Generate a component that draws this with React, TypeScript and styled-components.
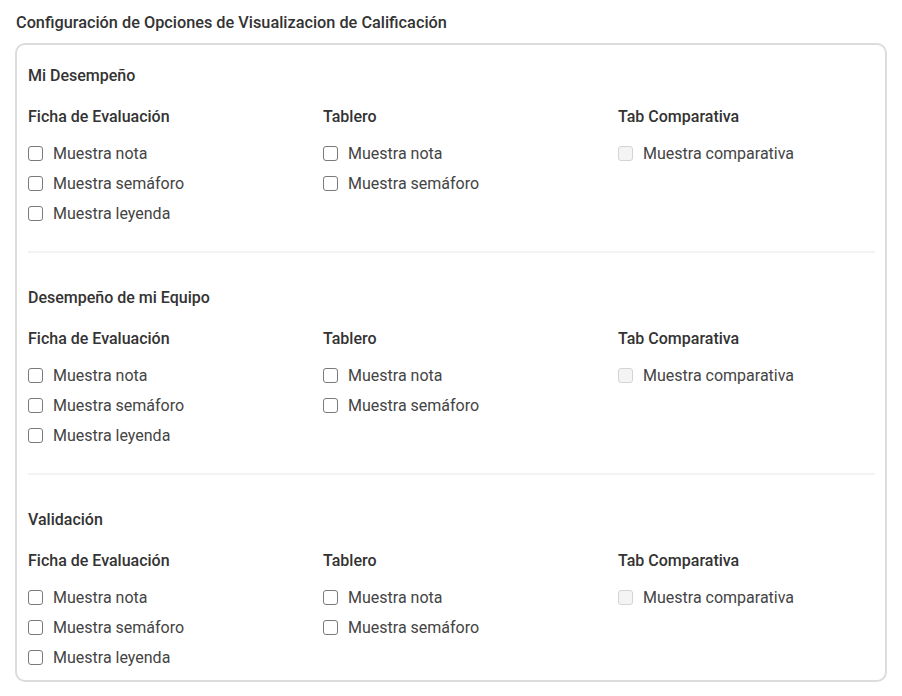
import styled, { createGlobalStyle } from "styled-components";

const GlobalStyle = createGlobalStyle`
  body {
    margin: 0;
    background: #ffffff;
    font-family: Roboto, "Liberation Sans", sans-serif;
    color: #333333;
  }
`;

const Page = styled.div`
  padding: 13px 15px 14px 15px;
`;

const PageTitle = styled.h2`
  margin: 0 0 10px 1px;
  font-size: 16.3px;
  line-height: 20px;
  font-weight: 500;
  color: #333333;
`;

const Card = styled.div`
  border: 2px solid #dcdcdc;
  border-radius: 10px;
  padding: 21px 10px 8px 11px;
`;

const Section = styled.section``;

const SectionTitle = styled.h3`
  margin: 0 0 21px;
  font-size: 16px;
  line-height: 20px;
  font-weight: 500;
  color: #333333;
`;

const Columns = styled.div`
  display: grid;
  grid-template-columns: 295px 295px 1fr;
`;

const Column = styled.div`
  display: flex;
  flex-direction: column;
`;

const ColumnTitle = styled.h4`
  margin: 0 0 11px;
  font-size: 16px;
  line-height: 20px;
  font-weight: 500;
  color: #333333;
`;

const Option = styled.label<{ $disabled?: boolean }>`
  display: flex;
  align-items: center;
  gap: 10px;
  height: 30px;
  font-size: 16px;
  color: #444444;
  cursor: ${(p) => (p.$disabled ? "default" : "pointer")};
`;

const Box = styled.span<{ $disabled?: boolean }>`
  width: 15px;
  height: 15px;
  box-sizing: border-box;
  border: 1px solid ${(p) => (p.$disabled ? "#d4d4d4" : "#7a7a7a")};
  background: ${(p) => (p.$disabled ? "#f4f4f4" : "#ffffff")};
  border-radius: 3px;
  flex-shrink: 0;
`;

const Divider = styled.hr`
  border: none;
  height: 2px;
  background: #f3f3f3;
  margin: 23px 0 35px;
`;

interface IGroup {
  title: string;
  options: string[];
  disabled?: boolean;
}

const groups: IGroup[] = [
  {
    title: "Ficha de Evaluación",
    options: ["Muestra nota", "Muestra semáforo", "Muestra leyenda"],
  },
  { title: "Tablero", options: ["Muestra nota", "Muestra semáforo"] },
  { title: "Tab Comparativa", options: ["Muestra comparativa"], disabled: true },
];

const sections = ["Mi Desempeño", "Desempeño de mi Equipo", "Validación"];

function App() {
  return (
    <Page>
      <GlobalStyle />
      <PageTitle>Configuración de Opciones de Visualizacion de Calificación</PageTitle>
      <Card>
        {sections.map((name, i) => (
          <Section key={name}>
            <SectionTitle>{name}</SectionTitle>
            <Columns>
              {groups.map((group) => (
                <Column key={group.title}>
                  <ColumnTitle>{group.title}</ColumnTitle>
                  {group.options.map((opt) => (
                    <Option key={opt} $disabled={group.disabled}>
                      <Box $disabled={group.disabled} />
                      {opt}
                    </Option>
                  ))}
                </Column>
              ))}
            </Columns>
            {i < sections.length - 1 && <Divider />}
          </Section>
        ))}
      </Card>
    </Page>
  );
}

export default App;
